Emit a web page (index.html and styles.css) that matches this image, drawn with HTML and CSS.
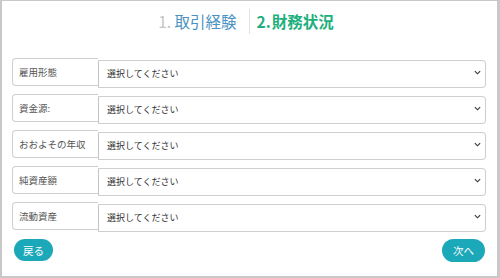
FILE: index.html
```html
<!DOCTYPE html>
<html lang="ja">
<head>
  <meta charset="UTF-8" />
  <meta name="viewport" content="width=device-width, initial-scale=1.0" />
  <title>財務状況</title>
  <link rel="stylesheet" href="styles.css">
</head>
<body>
  <div class="frame">
    <div class="steps">
      <div class="step done"><span class="num">1.</span> 取引経験</div>
      <div class="step-sep"></div>
      <div class="step current"><span class="num">2.</span>財務状況</div>
    </div>

    <form class="form">
      <div class="row">
        <label class="row-label">雇用形態</label>
        <div class="select-wrap">
          <select><option>選択してください</option></select>
          <svg class="chev" viewBox="0 0 8 5" width="7" height="5"><path d="M1 1l3 3 3-3" fill="none" stroke="#333" stroke-width="1.3"/></svg>
        </div>
      </div>
      <div class="row">
        <label class="row-label">資金源:</label>
        <div class="select-wrap">
          <select><option>選択してください</option></select>
          <svg class="chev" viewBox="0 0 8 5" width="7" height="5"><path d="M1 1l3 3 3-3" fill="none" stroke="#333" stroke-width="1.3"/></svg>
        </div>
      </div>
      <div class="row">
        <label class="row-label">おおよその年収</label>
        <div class="select-wrap">
          <select><option>選択してください</option></select>
          <svg class="chev" viewBox="0 0 8 5" width="7" height="5"><path d="M1 1l3 3 3-3" fill="none" stroke="#333" stroke-width="1.3"/></svg>
        </div>
      </div>
      <div class="row">
        <label class="row-label">純資産額</label>
        <div class="select-wrap">
          <select><option>選択してください</option></select>
          <svg class="chev" viewBox="0 0 8 5" width="7" height="5"><path d="M1 1l3 3 3-3" fill="none" stroke="#333" stroke-width="1.3"/></svg>
        </div>
      </div>
      <div class="row">
        <label class="row-label">流動資産</label>
        <div class="select-wrap">
          <select><option>選択してください</option></select>
          <svg class="chev" viewBox="0 0 8 5" width="7" height="5"><path d="M1 1l3 3 3-3" fill="none" stroke="#333" stroke-width="1.3"/></svg>
        </div>
      </div>

      <div class="actions">
        <button type="button" class="btn back">戻る</button>
        <button type="button" class="btn next">次へ</button>
      </div>
    </form>
  </div>
</body>
</html>
```

FILE: styles.css
```css
body {
  margin: 0;
  font-family: "Noto Sans CJK JP", "Noto Sans", sans-serif;
  background-color: #ffffff;
  color: #333;
}

.frame {
  box-sizing: border-box;
  width: 500px;
  height: 278px;
  border: 2px solid #c8c8c8;
  border-right-width: 3px;
  border-top-width: 1px;
  padding: 7px 10px 0 10px;
}

.steps {
  display: flex;
  justify-content: center;
  align-items: center;
  height: 26px;
  padding-right: 7px;
}

.step {
  font-size: 15.5px;
  line-height: 26px;
}

.step.done {
  color: #4b92c3;
  padding-right: 12px;
}

.step.done .num {
  color: #c4c4c4;
}

.step.current {
  color: #1db07e;
  font-weight: bold;
  padding-left: 7px;
}

.step.current .num {
  margin-right: 1px;
}

.step-sep {
  width: 1px;
  height: 25px;
  background-color: #e2e2e2;
}

.form {
  margin-top: 24px;
}

.row {
  display: flex;
  height: 28px;
  margin-bottom: 8px;
  margin-right: 1px;
}

.row-label {
  box-sizing: border-box;
  width: 86px;
  flex-shrink: 0;
  padding-left: 6px;
  font-size: 9.5px;
  line-height: 26px;
  color: #555;
  border: 1px solid #cfcfcf;
  border-right: none;
  border-radius: 4px 0 0 4px;
  background-color: #fff;
}

.select-wrap {
  position: relative;
  flex: 1;
}

.select-wrap select {
  appearance: none;
  -webkit-appearance: none;
  box-sizing: border-box;
  width: 100%;
  height: 28px;
  margin: 0;
  padding: 0 20px 0 8px;
  font-family: inherit;
  font-size: 9px;
  color: #333;
  background-color: #fff;
  border: 1px solid #cfcfcf;
  border-left: 1.5px solid #c4c4c4;
  border-radius: 0 4px 4px 0;
  outline: none;
}

.chev {
  position: absolute;
  right: 5px;
  top: 12px;
}

.actions {
  display: flex;
  justify-content: space-between;
  padding: 1px 2px 0 2px;
}

.btn {
  font-family: inherit;
  font-size: 10.5px;
  color: #fff;
  background-color: #1ba8b9;
  border: none;
  border-radius: 12px;
  height: 22px;
  padding: 0 9px;
  cursor: pointer;
}

.btn.next {
  height: 23px;
  padding: 0 11px;
}
```
